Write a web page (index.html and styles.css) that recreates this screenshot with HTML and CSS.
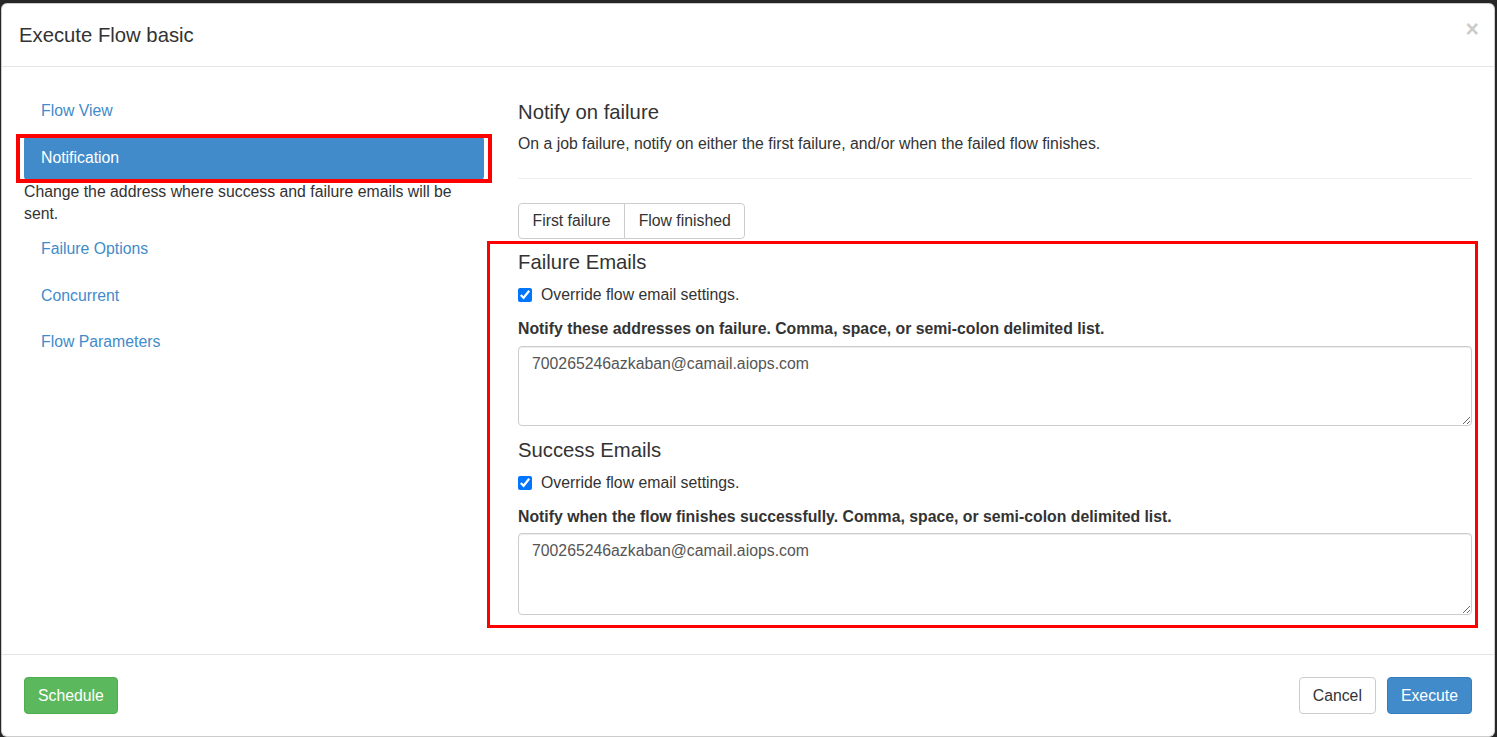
FILE: index.html
```html
<!DOCTYPE html>
<html>
<head>
<meta charset="utf-8">
<title>Execute Flow basic</title>
<link rel="stylesheet" href="styles.css">
</head>
<body>
<div class="modal">
  <div class="modal-header">
    <h4 class="modal-title">Execute Flow basic</h4>
    <button class="close" type="button">&times;</button>
  </div>
  <div class="modal-body">
    <div class="sidebar">
      <ul class="nav-pills">
        <li><a href="#">Flow View</a></li>
        <li class="active"><a href="#">Notification</a>
          <div class="nav-desc">Change the address where success and failure emails will be sent.</div>
        </li>
        <li><a href="#">Failure Options</a></li>
        <li><a href="#">Concurrent</a></li>
        <li><a href="#">Flow Parameters</a></li>
      </ul>
    </div>
    <div class="panel">
      <h4 class="section-title first">Notify on failure</h4>
      <p class="section-text">On a job failure, notify on either the first failure, and/or when the failed flow finishes.</p>
      <hr class="divider">
      <div class="btn-group">
        <button class="btn btn-default" type="button">First failure</button>
        <button class="btn btn-default" type="button">Flow finished</button>
      </div>
      <h4 class="section-title">Failure Emails</h4>
      <label class="checkbox"><input type="checkbox" checked> Override flow email settings.</label>
      <div class="form-group">
        <label class="field-label">Notify these addresses on failure. Comma, space, or semi-colon delimited list.</label>
        <textarea class="form-control">700265246azkaban@camail.aiops.com</textarea>
      </div>
      <h4 class="section-title">Success Emails</h4>
      <label class="checkbox"><input type="checkbox" checked> Override flow email settings.</label>
      <div class="form-group last">
        <label class="field-label">Notify when the flow finishes successfully. Comma, space, or semi-colon delimited list.</label>
        <textarea class="form-control">700265246azkaban@camail.aiops.com</textarea>
      </div>
    </div>
  </div>
  <div class="modal-footer">
    <button class="btn btn-success" type="button">Schedule</button>
    <div class="footer-right">
      <button class="btn btn-default" type="button">Cancel</button>
      <button class="btn btn-primary" type="button">Execute</button>
    </div>
  </div>
  <div class="annot annot-nav"></div>
  <div class="annot annot-form"></div>
</div>
</body>
</html>
```

FILE: styles.css
```css
* { box-sizing: border-box; }
html, body { margin: 0; padding: 0; }
body {
  background: #262626;
  font-family: "Liberation Sans", Arial, sans-serif;
  font-size: 15.8px;
  line-height: 22px;
  color: #333;
  overflow: hidden;
}
.modal {
  position: relative;
  margin: 3px 2px 0 1px;
  background: #fff;
  border: 1px solid rgba(0,0,0,.2);
  border-radius: 6px;
}
.modal-header {
  display: flex;
  justify-content: space-between;
  align-items: flex-start;
  padding: 17px;
  border-bottom: 1px solid #e5e5e5;
}
.modal-title {
  margin: 0;
  font-size: 20.3px;
  font-weight: normal;
  line-height: 28px;
}
.close {
  border: 0;
  background: none;
  padding: 0;
  margin: -3px -2px 0 0;
  font-family: "Liberation Sans", Arial, sans-serif;
  font-size: 23px;
  font-weight: bold;
  line-height: 22px;
  color: #000;
  opacity: .2;
}
.modal-body {
  display: flex;
  gap: 34px;
  padding: 22px;
}
.sidebar { width: 460px; flex: none; }
.panel { flex: 1; min-width: 0; }
.nav-pills { list-style: none; margin: 0; padding: 0; }
.nav-pills li + li { margin-top: 2.5px; }
.nav-pills a {
  display: block;
  padding: 11px 17px;
  line-height: 22px;
  border-radius: 4px;
  color: #428bca;
  text-decoration: none;
}
.nav-pills li.active a { background: #428bca; color: #fff; }
.nav-desc { color: #333; padding-top: 1px; }

.section-title {
  margin: 12px 0 10px;
  font-size: 20.3px;
  font-weight: normal;
  line-height: 22px;
}
.section-text { margin: 0; }
.divider {
  margin: 23px 0 24px;
  border: 0;
  border-top: 1px solid #eee;
}
.btn-group { display: flex; }
.btn {
  font-family: "Liberation Sans", Arial, sans-serif;
  font-size: 15.8px;
  line-height: 22px;
  padding: 6px 13.5px;
  border: 1px solid transparent;
  border-radius: 4px;
  color: #333;
  background: #fff;
}
.btn-default { border-color: #ccc; }
.btn-group .btn + .btn { margin-left: -1px; border-top-left-radius: 0; border-bottom-left-radius: 0; }
.btn-group .btn:first-child { border-top-right-radius: 0; border-bottom-right-radius: 0; }

.checkbox {
  display: flex;
  align-items: center;
  gap: 9px;
  margin: 11px 0 12px;
  cursor: pointer;
}
.checkbox input { width: 14px; height: 14px; margin: 0; }
.field-label {
  display: block;
  font-weight: bold;
  margin-bottom: 6px;
}
.form-control {
  display: block;
  width: 100%;
  height: 80px;
  padding: 6px 13px;
  font-family: "Liberation Sans", Arial, sans-serif;
  font-size: 15.8px;
  line-height: 22px;
  color: #555;
  border: 1px solid #ccc;
  border-radius: 4px;
  box-shadow: inset 0 1px 1px rgba(0,0,0,.075);
  resize: both;
}
.form-group { margin-bottom: 13px; }
.form-group + .section-title { margin-top: 0; }
.form-group.last { margin-bottom: 17px; }
.form-group.last .field-label { margin-bottom: 5px; }
.form-group.last textarea { height: 82px; }

.modal-footer {
  display: flex;
  justify-content: space-between;
  padding: 22px 22px 22px;
  border-top: 1px solid #e5e5e5;
}
.modal-footer .btn { padding: 7px 13px; line-height: 21px; }
.footer-right { display: flex; gap: 11px; }
.modal-footer .btn-success { background: #5cb85c; border-color: #4cae4c; color: #fff; padding: 7px 13px; }
.btn-primary { background: #428bca; border-color: #357ebd; color: #fff; }

.annot { position: absolute; border: 4px solid #ff0000; pointer-events: none; }
.annot-nav { left: 14px; top: 130px; width: 476px; height: 49px; }
.annot-form { left: 485px; top: 237px; width: 991px; height: 387px; border-width: 3px; }
```
